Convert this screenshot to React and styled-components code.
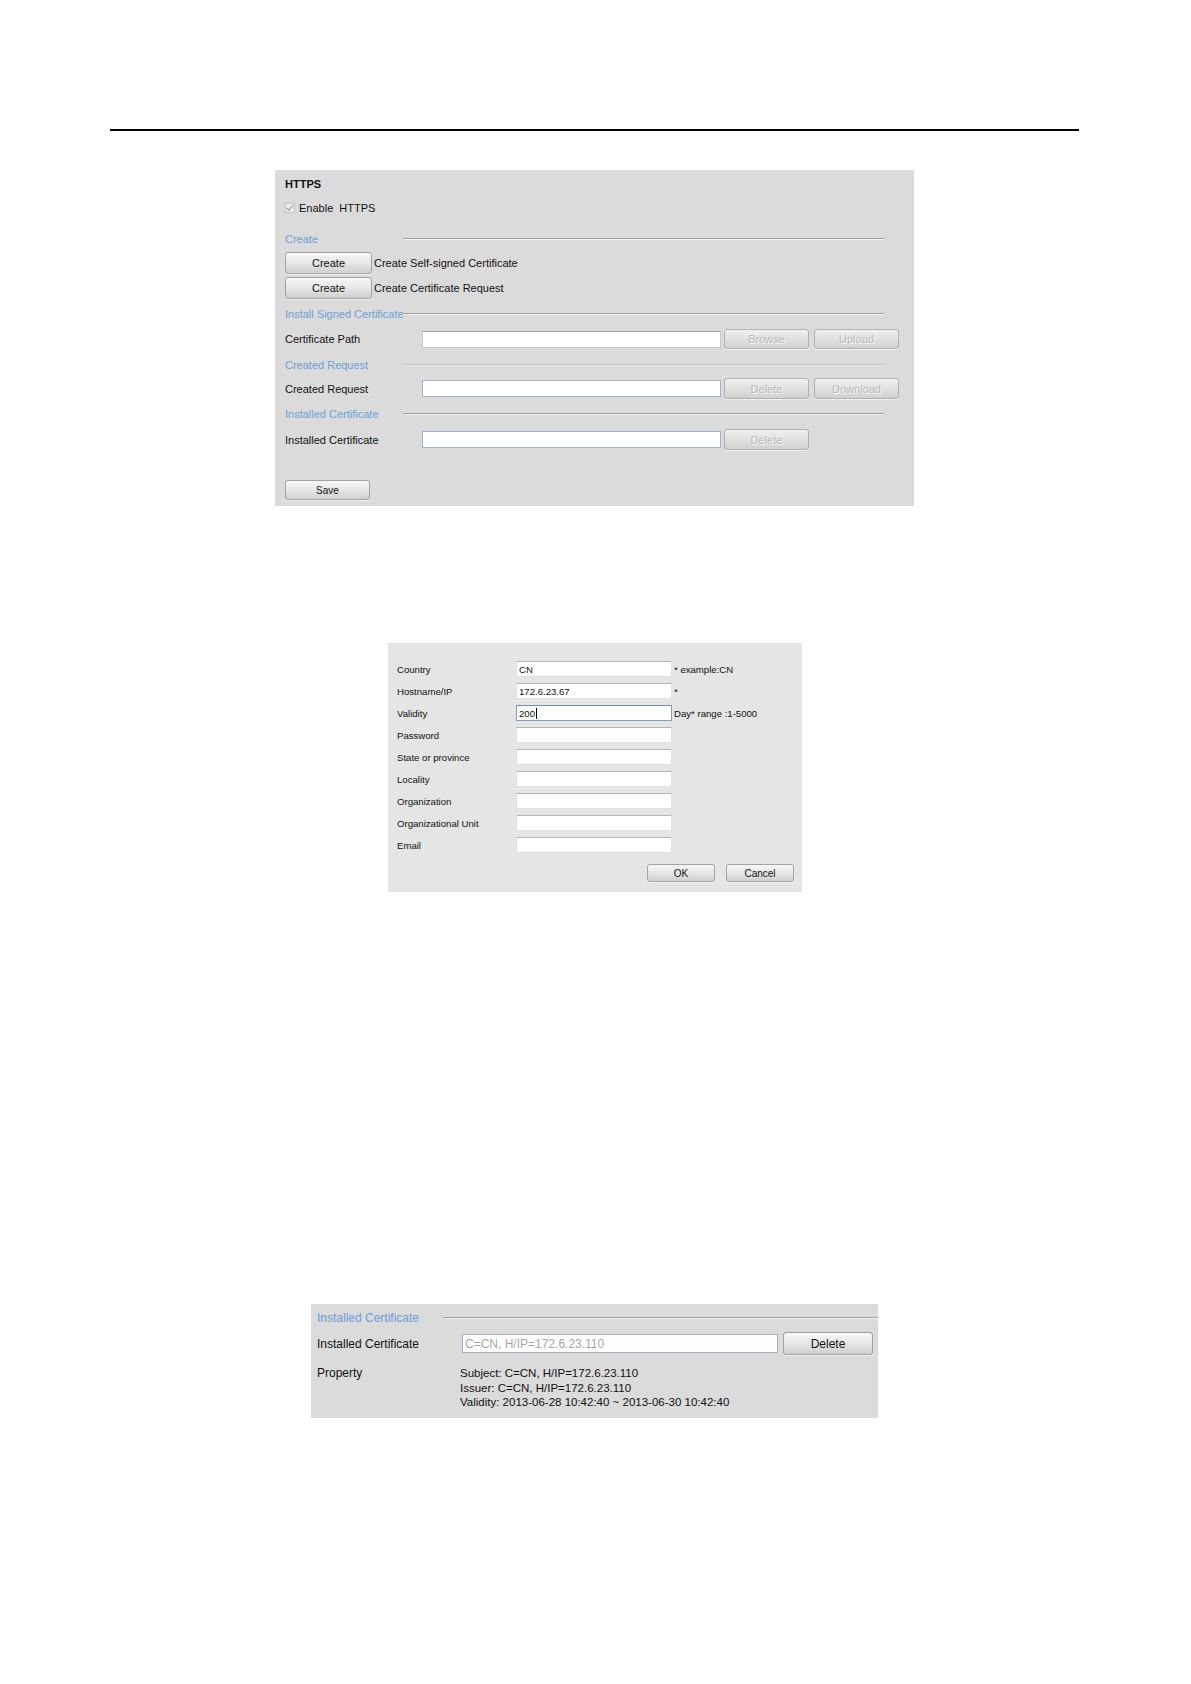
import React from "react";
import styled, { createGlobalStyle } from "styled-components";

const GlobalStyle = createGlobalStyle`
  html, body {
    margin: 0;
    padding: 0;
    background: #ffffff;
  }
  body {
    font-family: "Liberation Sans", Arial, sans-serif;
    color: #111111;
  }
`;

const Page = styled.div`
  width: 1191px;
  min-height: 1684px;
  padding-top: 129px;
  box-sizing: border-box;
  display: flex;
  flex-direction: column;
`;

const HeaderRule = styled.div`
  margin-left: 110px;
  width: 969px;
  height: 2px;
  background: #000;
`;

const Panel = styled.section`
  margin-left: ${(p) => p.$left}px;
  margin-top: ${(p) => p.$top}px;
  width: ${(p) => p.$w}px;
  background: ${(p) => p.$bg || "#dbdbdb"};
  box-sizing: border-box;
  padding: ${(p) => p.$pad};
  display: flex;
  flex-direction: column;
`;

const Row = styled.div`
  display: flex;
  align-items: center;
  height: ${(p) => p.$h || 20}px;
  margin-top: ${(p) => p.$mt || 0}px;
  font-size: ${(p) => p.$fs || 11}px;
`;

const Title = styled.div`
  font-weight: bold;
  font-size: 11px;
`;

const CheckBox = styled.span`
  width: 10px;
  height: 10px;
  border: 1px solid #c4c4c4;
  background: #ececec;
  display: inline-flex;
  align-items: center;
  justify-content: center;
  margin-right: 4px;
  box-sizing: border-box;
`;

const Legend = styled.div`
  display: flex;
  align-items: center;
  height: 20px;
  margin-top: ${(p) => p.$mt || 0}px;
`;

const LegendText = styled.div`
  width: ${(p) => p.$w}px;
  flex: none;
  color: #6b9fd6;
  font-size: ${(p) => p.$fs || 11}px;
  white-space: nowrap;
`;

const LegendLine = styled.div`
  width: ${(p) => p.$w}px;
  height: 0;
  border-top: 1px solid ${(p) => (p.$faint ? "#c6c6c6" : "#9e9e9e")};
  border-bottom: 1px solid ${(p) => (p.$faint ? "#e6e6e6" : "#f4f4f4")};
`;

const Label = styled.div`
  width: ${(p) => p.$w}px;
  flex: none;
  white-space: nowrap;
`;

const Field = styled.div`
  width: ${(p) => p.$w}px;
  height: ${(p) => p.$h}px;
  box-sizing: border-box;
  background: #fff;
  border: 1px solid ${(p) => p.$border || "#d2d2d2"};
  border-top-color: ${(p) => p.$borderTop || p.$border || "#a9a9a9"};
  display: flex;
  align-items: center;
  padding-left: 2px;
  color: ${(p) => p.$color || "#111"};
  font-size: inherit;
  white-space: nowrap;
  overflow: hidden;
`;

const Caret = styled.span`
  display: inline-block;
  width: 1px;
  height: 11px;
  background: #000;
  margin-left: 1px;
`;

const Button = styled.div`
  width: ${(p) => p.$w}px;
  height: ${(p) => p.$h}px;
  margin-left: ${(p) => p.$ml || 0}px;
  flex: none;
  box-sizing: border-box;
  border: 1px solid ${(p) => (p.$off ? "#b0b0b0" : "#a2a2a2")};
  border-radius: 3px;
  background: ${(p) =>
    p.$off
      ? "linear-gradient(#f0f0f0, #e0e0e0 50%, #d1d1d1)"
      : "linear-gradient(#f7f7f7, #e6e6e6 50%, #cfcfcf)"};
  box-shadow: 0 1px 0 rgba(255, 255, 255, 0.6);
  display: flex;
  align-items: center;
  justify-content: center;
  color: ${(p) => (p.$off ? "#bababa" : "#111")};
  text-shadow: ${(p) => (p.$off ? "1px 1px 0 #f8f8f8" : "none")};
  font-size: ${(p) => p.$fs || 11}px;
  white-space: nowrap;
`;

const Hint = styled.div`
  margin-left: 2px;
  white-space: nowrap;
`;

const FormGrid = styled.div`
  display: grid;
  grid-template-columns: 119px 156px auto;
  grid-auto-rows: 22px;
  align-items: center;
  font-size: 9.6px;
`;

const Actions = styled.div`
  display: flex;
  justify-content: flex-end;
  gap: 11px;
  margin-top: 8px;
`;

const PropertyRow = styled.div`
  display: flex;
  margin-top: 11px;
  font-size: 12px;
  line-height: 14.5px;
`;

const PropertyLines = styled.div`
  display: flex;
  flex-direction: column;
  margin-left: -2px;
  font-size: 11.5px;
`;

function CheckMark() {
  return (
    <svg width="8" height="8" viewBox="0 0 8 8">
      <polyline
        points="1,4 3,6.2 7,1.2"
        fill="none"
        stroke="#a9a9a9"
        strokeWidth="1.3"
      />
    </svg>
  );
}

function HttpsPanel() {
  return (
    <Panel $left={275} $top={39} $w={639} $pad="4px 0 6px 10px">
      <Row>
        <Title>HTTPS</Title>
      </Row>
      <Row $mt={4}>
        <CheckBox>
          <CheckMark />
        </CheckBox>
        Enable&nbsp; HTTPS
      </Row>

      <Legend $mt={11}>
        <LegendText $w={118}>Create</LegendText>
        <LegendLine $w={481} />
      </Legend>
      <Row $h={22} $mt={3}>
        <Button $w={87} $h={22}>Create</Button>
        <Hint>Create Self-signed Certificate</Hint>
      </Row>
      <Row $h={22} $mt={3}>
        <Button $w={87} $h={22}>Create</Button>
        <Hint>Create Certificate Request</Hint>
      </Row>

      <Legend $mt={5}>
        <LegendText $w={118}>Install Signed Certificate</LegendText>
        <LegendLine $w={481} />
      </Legend>
      <Row $mt={5}>
        <Label $w={137}>Certificate Path</Label>
        <Field $w={299} $h={17} $border="#c9c9c9" $borderTop="#9aa4b0" />
        <Button $w={85} $h={20} $ml={3} $off>
          Browse
        </Button>
        <Button $w={85} $h={20} $ml={5} $off>
          Upload
        </Button>
      </Row>

      <Legend $mt={6}>
        <LegendText $w={118}>Created Request</LegendText>
        <LegendLine $w={481} $faint />
      </Legend>
      <Row $h={21} $mt={3}>
        <Label $w={137}>Created Request</Label>
        <Field $w={299} $h={17} $border="#9fb2c8" />
        <Button $w={85} $h={21} $ml={3} $off>
          Delete
        </Button>
        <Button $w={85} $h={21} $ml={5} $off>
          Download
        </Button>
      </Row>

      <Legend $mt={5}>
        <LegendText $w={118}>Installed Certificate</LegendText>
        <LegendLine $w={481} />
      </Legend>
      <Row $h={21} $mt={5}>
        <Label $w={137}>Installed Certificate</Label>
        <Field $w={299} $h={17} $border="#9fb2c8" />
        <Button $w={85} $h={21} $ml={3} $off>
          Delete
        </Button>
      </Row>

      <Row $mt={30}>
        <Button $w={85} $h={20} $fs={10}>
          Save
        </Button>
      </Row>
    </Panel>
  );
}

const certFields = [
  { label: "Country", value: "CN", hint: "* example:CN" },
  { label: "Hostname/IP", value: "172.6.23.67", hint: "*" },
  { label: "Validity", value: "200", hint: "Day*  range :1-5000", focus: true },
  { label: "Password" },
  { label: "State or province" },
  { label: "Locality" },
  { label: "Organization" },
  { label: "Organizational Unit" },
  { label: "Email" },
];

function CreateCertPanel() {
  return (
    <Panel $left={388} $top={137} $w={414} $bg="#e5e5e5" $pad="15px 8px 10px 9px">
      <FormGrid>
        {certFields.map((f) => (
          <React.Fragment key={f.label}>
            <Label>{f.label}</Label>
            <Field
              $w={156}
              $h={16}
              $border={f.focus ? "#7f9fc4" : "#e0e0e0"}
              $borderTop={f.focus ? "#6f8fb8" : "#b4b4b4"}
            >
              {f.value}
              {f.focus && <Caret />}
            </Field>
            <Hint>{f.hint || ""}</Hint>
          </React.Fragment>
        ))}
      </FormGrid>
      <Actions>
        <Button $w={68} $h={18} $fs={10}>
          OK
        </Button>
        <Button $w={68} $h={18} $fs={10}>
          Cancel
        </Button>
      </Actions>
    </Panel>
  );
}

function InstalledPanel() {
  return (
    <Panel $left={311} $top={412} $w={567} $pad="4px 0 8px 6px">
      <Legend>
        <LegendText $w={126} $fs={12}>
          Installed Certificate
        </LegendText>
        <LegendLine $w={435} />
      </Legend>
      <Row $h={23} $mt={4} $fs={12}>
        <Label $w={145}>Installed Certificate</Label>
        <Field $w={316} $h={19} $border="#9db0c7" $color="#a6a6a6">
          C=CN, H/IP=172.6.23.110
        </Field>
        <Button $w={90} $h={23} $ml={5} $fs={12}>
          Delete
        </Button>
      </Row>
      <PropertyRow>
        <Label $w={145}>Property</Label>
        <PropertyLines>
          <span>Subject: C=CN, H/IP=172.6.23.110</span>
          <span>Issuer: C=CN, H/IP=172.6.23.110</span>
          <span>Validity: 2013-06-28 10:42:40 ~ 2013-06-30 10:42:40</span>
        </PropertyLines>
      </PropertyRow>
    </Panel>
  );
}

export default function App() {
  return (
    <>
      <GlobalStyle />
      <Page>
        <HeaderRule />
        <HttpsPanel />
        <CreateCertPanel />
        <InstalledPanel />
      </Page>
    </>
  );
}
